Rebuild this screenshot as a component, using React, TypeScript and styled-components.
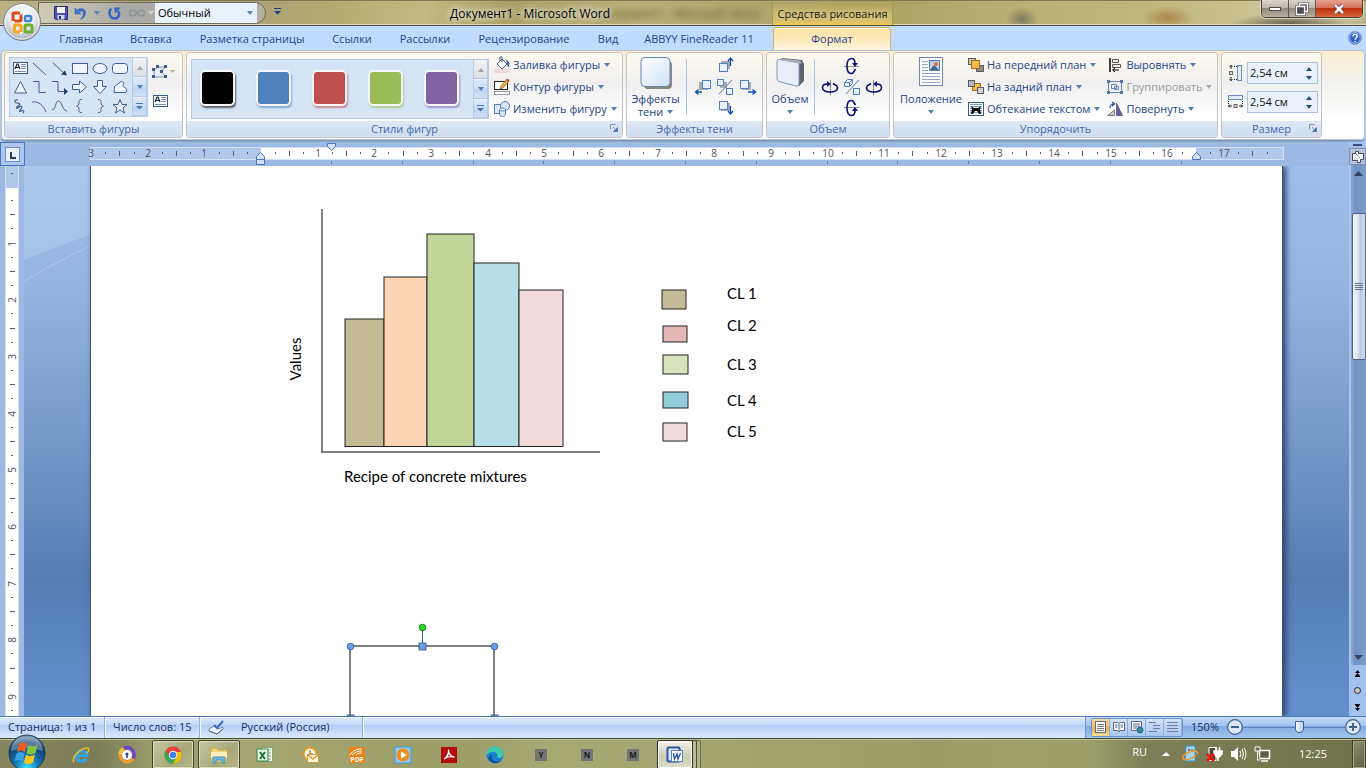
import React from 'react';
import styled, { createGlobalStyle, css } from 'styled-components';

const uiFont = `'Open Sans', 'Segoe UI', sans-serif`;

const GlobalStyle = createGlobalStyle`
  * { box-sizing: border-box; }
  html, body { margin: 0; padding: 0; }
  body { font-family: ${uiFont}; font-size: 11px; line-height: 14px; color: #1e3c7b; overflow: hidden; }
  button, input, select { font: inherit; color: inherit; margin: 0; padding: 0; border: 0; background: none; }
  button { cursor: default; display: flex; align-items: center; }
  svg { display: block; flex: none; overflow: visible; }
`;

/* ---------- shell ---------- */

const Screen = styled.div`
  position: relative;
  display: flex;
  flex-direction: column;
  height: 100vh;
  background: #bfdbff;
`;

const TitleBar = styled.header`
  display: flex;
  height: 26px;
  border-top: 1px solid #7d7850;
  border-bottom: 1px solid #4d5038;
  box-shadow: inset 0 -1px 0 #d8d6bc;
  background:
    radial-gradient(14px 12px at 190px 20px, #8a8f8466, transparent),
    radial-gradient(ellipse 16px 12px at 1022px 18px, #6c6f5ccc, transparent),
    radial-gradient(ellipse 26px 12px at 1168px 17px, #ad8448, transparent),
    radial-gradient(ellipse 60px 12px at 1290px 24px, #5e5a45, transparent),
    linear-gradient(100deg, #b9b287 0, #aaa27a 18%, #b3a96f 24%, #c2ba80 31%, #a9a065 37%, #b8b078 46%, #b0a76c 56%, #a89f60 63%, #b6ae70 72%, #c0b87b 84%, #cfc9a2 96%, #b9b48e 100%);
`;

const TitleLeft = styled.div`
  display: flex;
  width: 772px;
`;

const QuickAccess = styled.div`
  display: flex;
  align-items: center;
  width: 228px;
  height: 22px;
  margin: 1px 0 0 38px;
  padding-left: 13px;
  border: 1px solid #6d6b5b;
  border-radius: 0 11px 11px 0;
  background: linear-gradient(90deg, #cfcab2, #aaaaa6 40%, #b4b2a4);
`;

const QatButton = styled.button<{ $w: number }>`
  justify-content: center;
  width: ${p => p.$w}px;
  height: 20px;
`;

const StyleBox = styled.button`
  width: 102px;
  height: 20px;
  padding: 0 4px 0 3px;
  justify-content: space-between;
  background: #e9f1fb;
  color: #000;
`;

const WindowTitle = styled.h1`
  flex: 1;
  margin: 0;
  padding-top: 6px;
  font-size: 12px;
  line-height: 14px;
  font-weight: 400;
  text-align: center;
  color: #000;
  text-shadow: 0 0 6px #fff, 0 0 8px #fff, 150px 0 6px #3c3a20aa;
`;

const ContextTitle = styled.div`
  width: 121px;
  padding-top: 6px;
  text-align: center;
  white-space: nowrap;
  color: #1c1a10;
  border-left: 1px solid #a59a58;
  border-right: 1px solid #a59a58;
  background: linear-gradient(#c6bb6e00, #d8c06a 85%, #f3ca52);
  text-shadow: 0 0 5px #f4ecc0;
`;

const WindowButtons = styled.div`
  display: flex;
  height: 18px;
  margin: -1px 3px 0 auto;
  border: 1px solid #4b4539;
  border-top: 0;
  border-radius: 0 0 5px 5px;
  overflow: hidden;
  box-shadow: 0 0 1px 1px #ffffff80;
`;

const WindowButton = styled.button<{ $close?: boolean }>`
  justify-content: center;
  width: ${p => (p.$close ? 46 : 27)}px;
  border-right: ${p => (p.$close ? 0 : '1px solid #5f594d')};
  background: ${p =>
    p.$close
      ? 'linear-gradient(#e5a28f 0, #d4725a 45%, #bd2f10 50%, #d9683c 100%)'
      : 'linear-gradient(#ddd6cc 0, #bdb5a8 45%, #938a7c 50%, #b9b19f 100%)'};
`;

const TabRow = styled.nav`
  display: flex;
  height: 24px;
  padding-left: 46px;
  background: #bfdbff;
`;

const Tab = styled.button<{ $w: number }>`
  justify-content: center;
  width: ${p => p.$w}px;
  height: 24px;
  padding-top: 2px;
  white-space: nowrap;
  color: #1e4488;
`;

const ActiveTab = styled(Tab)`
  margin: 1px 0 0 7px;
  height: 24px;
  padding: 0 0 2px;
  border: 1px solid #cfb57a;
  border-top-color: #e0b74c;
  border-bottom: 0;
  border-radius: 4px 4px 0 0;
  background: linear-gradient(#fff 0, #fbe3a5 8%, #fde9bb 50%, #fff6e2 100%);
`;

const HelpButton = styled.button`
  margin: 0 4px 0 auto;
`;

/* ---------- ribbon ---------- */

const Ribbon = styled.section`
  display: flex;
  gap: 3px;
  height: 90px;
  margin: 0 1px;
  padding: 1px 2px;
  border: 1px solid #b6c2d2;
  border-radius: 4px;
  background: linear-gradient(#fdedc9 0, #f7efdf 14%, #f2f1ef 35%, #fff 80%);
  box-shadow: 0 2px 2px #7a93b8;
`;

const Group = styled.section<{ $w: number }>`
  display: flex;
  flex-direction: column;
  width: ${p => p.$w}px;
  height: 86px;
  border: 1px solid #c4c6ca;
  border-radius: 3px;
  overflow: hidden;
  background: linear-gradient(#fefaf0 0, #f8f5f0 18%, #f0efef 35%, #fff 75%);
`;

const GroupBody = styled.div`
  display: flex;
  flex: 1;
  padding: 4px 4px 0;
`;

const GroupLabel = styled.h2`
  display: flex;
  align-items: center;
  justify-content: center;
  position: relative;
  height: 16px;
  margin: 0;
  font-size: 11px;
  line-height: 14px;
  font-weight: 400;
  color: #3e6aaa;
  background: linear-gradient(#dfe8f6, #cfdcf0);
`;

const Launcher = styled.button`
  position: absolute;
  right: 4px;
  top: 3px;
`;

const Gallery = styled.div<{ $wide?: boolean }>`
  display: flex;
  height: 60px;
  margin-top: ${p => (p.$wide ? 2 : 0)}px;
  border: 1px solid #b6cde8;
  background: #d5e5f6;
`;

const ShapeGrid = styled.div`
  display: grid;
  grid-template-columns: repeat(6, 20px);
  grid-auto-rows: 19px;
  width: 122px;
`;

const IconButton = styled.button`
  justify-content: center;
`;

const ScrollColumn = styled.div`
  display: flex;
  flex-direction: column;
  width: 15px;
`;

const ScrollButton = styled.button<{ $off?: boolean }>`
  flex: 1;
  justify-content: center;
  border: 1px solid #b3cae8;
  border-top-color: #e7f0fb;
  color: ${p => (p.$off ? '#a0a6b0' : '#4a76bd')};
  background: ${p => (p.$off ? 'linear-gradient(#f2f2f3, #dcdfe4)' : 'linear-gradient(#dceafa 0, #c9ddf5 50%, #bbd3f2 51%, #cfe1f6)')};
`;

const EditColumn = styled.div`
  display: flex;
  flex-direction: column;
  gap: 15px;
  padding: 8px 0 0 4px;
`;

const Swatches = styled.div`
  display: flex;
  gap: 21px;
  width: 281px;
  padding: 10px 0 0 8px;
`;

const Swatch = styled.button<{ $c: string }>`
  width: 35px;
  height: 36px;
  border: 2px solid #f6f6f8;
  border-radius: 5px;
  background: ${p => p.$c};
  box-shadow: 1px 2px 2px ${p => p.$c}99;
`;

const ButtonColumn = styled.div<{ $ml?: number }>`
  display: flex;
  flex-direction: column;
  margin-top: -3px;
  margin-left: ${p => p.$ml || 0}px;
`;

const MenuButton = styled.button`
  gap: 3px;
  height: 22px;
  white-space: nowrap;
  color: #1e4488;
  > span { margin-right: 1px; }
  &:disabled { color: #9b9b9b; }
`;

const BigButton = styled.button<{ $w: number }>`
  flex-direction: column;
  justify-content: flex-start;
  width: ${p => p.$w}px;
  color: #1e4488;
`;

const BigLabel = styled.span`
  display: flex;
  align-items: center;
  gap: 4px;
  height: 13px;
  line-height: 13px;
`;

const BigIcon = styled.span`
  display: flex;
  height: 35px;
  align-items: flex-start;
`;

const Divider = styled.span<{ $m: string }>`
  width: 1px;
  height: 56px;
  margin: ${p => p.$m};
  background: #a9c4e4;
`;

const NudgePad = styled.div`
  display: grid;
  grid-template-columns: repeat(3, 22px);
  grid-template-rows: repeat(3, 21px);
  height: 63px;
  margin-top: -2px;
`;

const PadButton = styled.button<{ $area: string }>`
  justify-content: center;
  grid-area: ${p => p.$area};
`;

const SizeColumn = styled.div`
  display: flex;
  flex-direction: column;
  gap: 7px;
  padding: 5px 0 0 2px;
`;

const SizeRow = styled.label`
  display: flex;
  align-items: center;
  gap: 4px;
`;

const SpinBox = styled.span`
  display: flex;
  width: 71px;
  height: 22px;
  border: 1px solid #a9c2e4;
  background: #e9f2fc;
`;

const SpinInput = styled.input`
  flex: 1;
  min-width: 0;
  padding-left: 2px;
  color: #111;
  outline: 0;
`;

const Spinners = styled.span`
  display: flex;
  flex-direction: column;
  justify-content: center;
  gap: 5px;
  width: 11px;
  color: #244a86;
`;

/* ---------- document area ---------- */

const Main = styled.main`
  display: flex;
  flex: 1;
  min-height: 0;
  margin-top: 2px;
`;

const DocColumn = styled.div`
  display: flex;
  flex-direction: column;
  flex: 1;
  min-width: 0;
`;

const RulerRow = styled.div`
  display: flex;
  height: 24px;
  background: #9bb9e1;
`;

const TabSelector = styled.button`
  justify-content: center;
  width: 25px;
  height: 24px;
  border: 1px solid #4473ca;
  background: #adc6ea;
`;

const HorizontalRuler = styled.div`
  flex: 1;
  margin: 5px 65px 0 65px;
  height: 13px;
  border: 1px solid #d3e1f6;
  background: linear-gradient(#fff, #fff) 170px 0 / calc(100% - 257px) 100% no-repeat #b0c8ea;
`;

const Workspace = styled.div`
  display: flex;
  flex: 1;
  min-height: 0;
  overflow: hidden;
`;

const VerticalRuler = styled.div`
  width: 24px;
  padding: 0 5px;
  background: #9bb9e1;
`;

const VerticalStrip = styled.div`
  height: 100%;
  border: solid #d3e1f6;
  border-width: 0 1px;
  background: linear-gradient(#b0c8ea 22px, #fff 22px);
`;

const Desk = styled.div`
  position: relative;
  display: flex;
  flex: 1;
  padding: 0 66px;
  background: linear-gradient(#a1c0e9 0, #93b2dd 24%, #7396c8 52%, #557cb3 75%, #6590cf 100%);
`;

const Swoosh = styled.svg`
  position: absolute;
  left: 0;
  top: 0;
`;

const Page = styled.article`
  position: relative;
  flex: 1;
  border: solid #47536a;
  border-width: 0 1px;
  background: #fff;
  box-shadow: 3px 0 6px #2c456f;
  overflow: hidden;
`;

const ScrollBar = styled.div`
  display: flex;
  flex-direction: column;
  align-items: center;
  width: 17px;
  background: #a3c1ee;
`;

const SplitHandle = styled.button`
  width: 9px;
  height: 2px;
  margin: 2px 0 2px;
  background: #3a4a72;
`;

const RulerToggle = styled.button`
  justify-content: center;
  width: 17px;
  height: 17px;
  border: 1px solid #8090b4;
  background: #b9c2d8;
`;

const Track = styled.div`
  display: flex;
  flex-direction: column;
  align-items: center;
  flex: 1;
  width: 100%;
  padding: 6px 0 5px;
  color: #33425f;
  border-left: 2px solid #a8c4ec;
  background: linear-gradient(90deg, #8ba7ce, #6f92c2 30%, #7d9dc9);
`;

const Thumb = styled.button`
  justify-content: center;
  width: 14px;
  height: 147px;
  margin: 37px 0 auto;
  border: 1px solid #52648a;
  border-radius: 2px;
  background: linear-gradient(90deg, #f2f5fa, #dce3ed 45%, #b4c7de 60%, #d6e0ee);
`;

const BrowseButtons = styled.div`
  display: flex;
  flex-direction: column;
  align-items: center;
  justify-content: space-around;
  height: 51px;
`;

/* ---------- status bar ---------- */

const StatusBar = styled.footer`
  display: flex;
  height: 23px;
  color: #15305f;
  border-top: 1px solid #4c7bb3;
  border-bottom: 1px solid #3c4738;
  background: linear-gradient(#fff 0, #d7e6fa 8%, #c4daf7 35%, #b1cef5 38%, #cfe1f9 80%, #dbe9fb 100%);
`;

const StatusItem = styled.button<{ $w: number }>`
  width: ${p => p.$w}px;
  padding: 0 0 1px 8px;
  gap: 16px;
  white-space: nowrap;
  border-right: 1px solid #8fb2df;
  box-shadow: 1px 0 0 #f2f7fe;
`;

const StatusTools = styled.div`
  display: flex;
  align-items: center;
  width: 281px;
  margin-left: auto;
  padding: 0 5px 1px 5px;
  border-left: 1px solid #6e95cc;
  background: linear-gradient(#c3dafa 0, #a4c4f2 40%, #83abe2 45%, #a5c5f0 100%);
`;

const ViewButtons = styled.div`
  display: flex;
  border: 1px solid #6e93c9;
  border-radius: 2px;
`;

const ViewButton = styled.button<{ $on?: boolean }>`
  justify-content: center;
  width: 18px;
  height: 17px;
  border-right: 1px solid #8fb0dc;
  background: ${p => (p.$on ? 'linear-gradient(#fbd9a0, #f3ae48 60%, #fde39a)' : 'linear-gradient(#d4e3f7, #a9c6ee)')};
`;

const ZoomValue = styled.button`
  justify-content: center;
  width: 44px;
`;

const ZoomSlider = styled.input`
  appearance: none;
  flex: 1;
  min-width: 0;
  height: 16px;
  background: linear-gradient(#5d83bb, #5d83bb) 0 8px / 100% 1px no-repeat;
  &::-webkit-slider-thumb {
    appearance: none;
    width: 9px;
    height: 12px;
    border: 1px solid #3f619b;
    border-radius: 1px 1px 5px 5px;
    background: linear-gradient(90deg, #f6f9fd, #b9cde9);
  }
`;

/* ---------- taskbar ---------- */

const TaskBar = styled.footer`
  display: flex;
  height: 29px;
  border-top: 1px solid #c5c69c;
  background: linear-gradient(90deg, #85865f 0, #7c7d57 7%, #989a69 11%, #a5a873 18%, #9b9d69 33%, #a6a974 40%, #a2a56f 52%, #9fa26c 62%, #999b68 68%, #9fa26c 74%, #9b9e6a 80%, #7c7e58 84%, #77794f 92%, #70724c 100%);
`;

const StartOrb = styled.button`
  position: relative;
  width: 60px;
  padding-left: 8px;
  > svg { margin-top: -3px; }
`;

const Task = styled.button<{ $open?: boolean }>`
  justify-content: center;
  width: 42px;
  height: 29px;
  margin-right: 4px;
  ${p => p.$open && css`
    border: 1px solid #3d3f29;
    border-radius: 2px;
    box-shadow: inset 0 0 0 1px #dcdcc0;
    background: linear-gradient(135deg, #c8c9a4, #a6a878 60%, #b5b78c);
  `}
`;

const ActiveTask = styled(Task)`
  width: 36px;
  margin: 0 0 0 -1px;
  border: 1px solid #2e2f20;
  border-radius: 2px;
  background: linear-gradient(#f3f3ec, #c9cbb0 60%, #dedfcb);
  box-shadow: inset 0 0 0 1px #fff, 4px 0 0 -1px #b9bb92, 4px 0 0 0 #4b4d36, 8px 0 0 -1px #b0b287, 8px 0 0 0 #6a6c4d;
`;

const KeyTile = styled.span`
  width: 12px;
  height: 12px;
  font-size: 8px;
  line-height: 12px;
  font-weight: 700;
  text-align: center;
  color: #1c1c1c;
  background: #747474;
`;

const Tray = styled.div`
  display: flex;
  align-items: center;
  gap: 8px;
  margin-left: auto;
  color: #fff;
`;

const Language = styled.button`
  margin: -5px 7px 0 0;
`;

const HiddenIcons = styled.button`
  margin-right: 4px;
`;

const Clock = styled.time`
  width: 66px;
  margin-left: 2px;
  text-align: center;
  color: #fff;
`;

const ShowDesktop = styled.button`
  width: 14px;
  height: 29px;
  margin-left: -2px;
  border: 1px solid #40422c;
  box-shadow: inset 0 0 0 1px #a5a786;
  background: linear-gradient(145deg, #8c8e6d, #5f6142);
`;

const Orb = styled.button`
  position: absolute;
  left: 3px;
  top: 3px;
`;

/* ---------- icons ---------- */

const Caret = ({ c = '#5380b8' }: { c?: string }) => (
  <svg width="6" height="4" viewBox="0 0 6 4"><path d="M0 0h6L3 4z" fill={c} /></svg>
);
const CaretUp = ({ c = 'currentColor' }: { c?: string }) => (
  <svg width="6" height="4" viewBox="0 0 6 4"><path d="M0 4h6L3 0z" fill={c} /></svg>
);
const CaretBar = () => (
  <svg width="7" height="7" viewBox="0 0 7 7"><path d="M0 0h7v1H0zM0 3h7L3.5 6.500z" fill="currentColor" /></svg>
);

const OfficeLogo = () => (
  <svg width="38" height="38" viewBox="0 0 38 38">
    <defs>
      <radialGradient id="orbFill" cx="50%" cy="30%" r="70%">
        <stop offset="0" stopColor="#fff" /><stop offset=".55" stopColor="#e4e7ec" /><stop offset="1" stopColor="#a8b0bd" />
      </radialGradient>
    </defs>
    <circle cx="19" cy="19" r="18.500" fill="url(#orbFill)" stroke="#7b8089" />
    <circle cx="19" cy="19" r="17" fill="none" stroke="#fff" strokeOpacity=".8" />
    <g fill="none" strokeWidth="3" strokeLinejoin="round">
      <rect x="10" y="10" width="8" height="8" rx="1" stroke="#dd4a18" />
      <rect x="22" y="13" width="6" height="5" rx="1" stroke="#3a86d8" strokeWidth="2.500" />
      <rect x="11.500" y="22" width="6.500" height="7" rx="1" stroke="#f4a91c" />
      <rect x="22" y="22" width="7" height="7" rx="1" stroke="#6fae2c" />
    </g>
    <path d="M18 8.500v3M28 19.500h3M18 29v2M8.500 19h3" stroke="#f4f4f4" strokeWidth="2" />
  </svg>
);

const SaveIcon = () => (
  <svg width="14" height="14" viewBox="0 0 14 14">
    <path d="M.5.5h13v13h-12l-1-1z" fill="#4a4fb0" stroke="#2c2f80" />
    <path d="M3 1h8v6H3z" fill="#f1f4fc" /><path d="M3.500 9h7v4.500h-7z" fill="#cfd5ea" /><path d="M5 10h2v3H5z" fill="#2c2f80" />
  </svg>
);
const UndoIcon = () => (
  <svg width="14" height="13" viewBox="0 0 14 13">
    <path d="M1 1v6h6L5 5c3-2 5 0 4 3-.5 1.500-1 3-2.500 4.500C10 11 12 8 11.500 5 11 1.500 6.500.5 3 3z" fill="#3f74cf" stroke="#2856a8" strokeWidth=".5" />
  </svg>
);
const RedoIcon = () => (
  <svg width="13" height="13" viewBox="0 0 13 13">
    <path d="M3 1.500C-.5 6.500 2.500 11.500 6.500 11.500S12.500 7 10 4" fill="none" stroke="#3468c8" strokeWidth="2.500" />
    <path d="M6 .5h7L7 6.500z" fill="#3468c8" />
  </svg>
);
const LinkIcon = () => (
  <svg width="16" height="8" viewBox="0 0 16 8">
    <path d="M8 4C6 1 4.500 1 3.500 1a3 3 0 000 6C5 7 6 6.500 8 4s3-3 4.500-3a3 3 0 010 6C11 7 10 7 8 4z" fill="none" stroke="#8f939b" strokeWidth="1.500" />
  </svg>
);
const HelpIcon = () => (
  <svg width="14" height="14" viewBox="0 0 14 14">
    <circle cx="7" cy="7" r="6.500" fill="#2a61cf" stroke="#8aa5d8" /><circle cx="7" cy="7" r="5.300" fill="none" stroke="#dfe9ff" strokeWidth=".6" />
    <path d="M5 5.500c0-3 4.200-2.600 4.200-.2C9.200 7 7.100 7 7.100 8.700M7.100 10v1.300" fill="none" stroke="#fff" strokeWidth="1.500" />
  </svg>
);
const LauncherIcon = () => (
  <svg width="8" height="8" viewBox="0 0 8 8">
    <path d="M.5 5.500v-5h5M3 3l3 3M7.500 3.500v4h-4z" fill="none" stroke="#7492bd" /><path d="M3.500 7.500h4v-4z" fill="#4a6fa5" />
  </svg>
);

const TextBoxIcon = () => (
  <svg width="16" height="14" viewBox="0 0 16 14">
    <rect x="1.500" y="1.500" width="14" height="11" fill="#fff" stroke="#3c5a86" />
    <path d="M3 8l2-5h1l2 5M4 6.500h3" fill="none" stroke="#10203c" strokeWidth="1.200" />
    <path d="M9 3.500h5M9 5.500h5M9 7.500h5M3 10.500h11" stroke="#6f8fbf" />
  </svg>
);

const shapePaths: React.ReactNode[] = [
  <path key="a" d="M3 5l13 12" />,
  <g key="b"><path d="M3 5l11 10" /><path d="M17 17.500l-6-1 4-4z" fill="#1f3f6e" stroke="none" /></g>,
  <rect key="c" x="2.500" y="5.500" width="15" height="10" />,
  <ellipse key="d" cx="10" cy="10.500" rx="7" ry="5" />,
  <rect key="e" x="2.500" y="5.500" width="15" height="10" rx="3" />,
  <path key="f" d="M10.500 4.500l6 11.500h-12z" />,
  <path key="g" d="M3 4.500h6v11h7" fill="none" />,
  <g key="h"><path d="M2 4.500h6v10h7" fill="none" /><path d="M14 11l4 3.500-4 3.500z" fill="#1f3f6e" stroke="none" /></g>,
  <path key="i" d="M2.500 7.500h7v-3.500l7 6-7 6v-3.500h-7z" />,
  <path key="j" d="M7.500 3.500h5v6h4l-6.500 7-6.500-7h4z" />,
  <path key="k" d="M4 15.500h12c3-5-3-4-3-7 2-3 0-4-2-4L4.500 9.500z" />,
  <path key="l" d="M8 4C4 3 4 7 7 7s4 1 1 3-1 3 1 1 4 0 2 2-2 3 0 2 4 0 2 2" fill="none" strokeWidth="1.200" />,
  <path key="m" d="M2 6c7-1 11 3 14 10" fill="none" />,
  <path key="n" d="M2 14c4 0 3-9 6.500-9s4 10 8.500 10" fill="none" />,
  <path key="o" d="M12 3.500c-3 0-3 1-3 3s-1 3.500-2.500 3.500C8 10 9 11 9 13.500s0 3 3 3" fill="none" />,
  <path key="p" d="M8 3.500c3 0 3 1 3 3s1 3.500 2.500 3.500C12 10 11 11 11 13.500s0 3-3 3" fill="none" />,
  <path key="q" d="M10 3.500l2 5h5l-4 3.500 1.500 5-4.500-3-4.500 3 1.500-5-4-3.500h5z" />,
];

const ShapeIcon = ({ i }: { i: number }) => (
  <svg width="20" height="20" viewBox="0 0 20 20" fill="#eef5fd" stroke="#3d5f92">{shapePaths[i]}</svg>
);

const EditPointsIcon = () => (
  <svg width="23" height="14" viewBox="0 0 23 14">
    <path d="M2 12V5l4-3h8L9 6l5 6z" fill="#e6edf7" stroke="#8298bd" />
    <g fill="#3f5c8f"><path d="M0 3h3v3H0zM4 0h3v3H4zM12 0h3v3h-3zM8 5h3v3H8zM0 10h3v3H0zM12 10h3v3h-3z" /></g>
    <path d="M18 5h5l-2.500 3z" fill="#a9a9a9" />
  </svg>
);

const FillIcon = () => (
  <svg width="16" height="16" viewBox="0 0 16 16">
    <path d="M0 12h16v4H0z" fill="#f2d6da" />
    <path d="M3 7l5-5 5 5-5 5z" fill="#fdfdfd" stroke="#4b5f80" /><path d="M6 4V0h2v5" fill="none" stroke="#4b5f80" />
    <path d="M12 3c4 1 4 5 2 8l-1-4z" fill="#2f65b5" />
  </svg>
);
const OutlineIcon = () => (
  <svg width="16" height="16" viewBox="0 0 16 16">
    <rect x=".5" y="2.500" width="13" height="8" fill="#fff" stroke="#222" />
    <path d="M6 10l1-3 6-7 2 2-6 7z" fill="#f0b545" stroke="#7f5a20" strokeWidth=".7" /><path d="M12 1l2-1 1.500 1.500L14 3z" fill="#cf3c3c" />
    <rect x=".5" y="12.500" width="15" height="3" fill="#fff" stroke="#9a9a9a" />
  </svg>
);
const ChangeShapeIcon = () => (
  <svg width="16" height="16" viewBox="0 0 16 16" fill="#dbe8f8" stroke="#527db8">
    <path d="M.5 3.500h8v9h-8z" /><circle cx="11" cy="5" r="4.500" /><path d="M5.500 8.500v5c0 2.500 6 2.500 6 0v-5" /><ellipse cx="8.500" cy="8.500" rx="3" ry="1.500" fill="#fff" />
  </svg>
);

const ShadowBigIcon = () => (
  <svg width="32" height="33" viewBox="0 0 32 33">
    <defs><linearGradient id="sh" x2="1" y2="1"><stop stopColor="#fff" /><stop offset="1" stopColor="#cfe0f7" /></linearGradient></defs>
    <rect x="4" y="4" width="28" height="28" rx="4" fill="#8d8578" /><rect x="1" y=".5" width="29" height="29" rx="4" fill="url(#sh)" stroke="#5f86bd" />
  </svg>
);
const CubeBigIcon = () => (
  <svg width="28" height="30" viewBox="0 0 28 30">
    <path d="M3 3l3-2 20 2 2 4v17l-5 5z" fill="#5c6470" /><path d="M4 2.500l18 2.500q1 0 1 2v20q0 3-3 2L3 24.500Q1 24 1 21V5q0-3 3-2.500z" fill="#e9eff9" stroke="#7f95bb" />
    <path d="M5 1.500l19 2 2 3-3 0-18-3z" fill="#a5adba" />
  </svg>
);
const PositionBigIcon = () => (
  <svg width="25" height="30" viewBox="0 0 25 30">
    <rect x=".5" y=".5" width="23" height="28" fill="#fcfdff" stroke="#6e87ac" />
    <path d="M3 4.500h6M3 7.500h6M3 10.500h6M3 13.500h6M3 16.500h18M3 19.500h18M3 22.500h18M3 25.500h18" stroke="#8ea8cc" />
    <rect x="10.500" y="3.500" width="10" height="10" fill="#b7d0ee" stroke="#5c7fb0" /><path d="M11 13l4-5 5 5z" fill="#4a5f83" /><circle cx="17" cy="7" r="2" fill="#e0703a" />
  </svg>
);

const NudgeIcon = ({ dir }: { dir: 'up' | 'down' | 'left' | 'right' }) => {
  const arrow = { up: 'M13.500 9V2M11 4l2.500-3L16 4', down: 'M13.500 7v7M11 12l2.500 3 2.500-3', left: 'M7 14H1M3.500 11.500L.5 14l3 2.500', right: 'M9 14h7M13.500 11.500l3 2.500-3 2.500' }[dir];
  const x = dir === 'left' ? 7 : dir === 'right' ? 1 : 2;
  const y = dir === 'up' ? 6 : 2;
  return (
    <svg width="17" height="17" viewBox="0 0 17 17">
      <rect x={x + (dir === 'left' ? -3 : 2)} y={y + (dir === 'up' ? -2 : 2)} width="9" height="8" fill="#a9a9a9" />
      <rect x={x + .5} y={y + .5} width="8" height="8" fill="#eaf2fd" stroke="#4e80c4" />
      <path d={arrow} fill="none" stroke="#0d4fae" strokeWidth="1.300" />
    </svg>
  );
};
const ShadowToggleIcon = () => (
  <svg width="16" height="16" viewBox="0 0 16 16" fill="#eaf2fd" stroke="#4e80c4">
    <path d="M3 3h7v6H3z" fill="#aaa" stroke="none" /><rect x=".5" y=".5" width="6" height="6" /><path d="M15 1L2 15" /><rect x="9.500" y="9.500" width="6" height="6" />
  </svg>
);
const CubeToggleIcon = () => (
  <svg width="16" height="16" viewBox="0 0 16 16" fill="#eaf2fd" stroke="#4e80c4">
    <path d="M.5 3.500l3-3h5v4l-3 3h-5zM.5 3.500h5v4M5.500 3.500l3-3" /><path d="M15 1L2 15" /><rect x="9.500" y="9.500" width="6" height="6" />
  </svg>
);
const tiltTransforms = {
  down: undefined,
  up: 'translate(0 16) scale(1 -1)',
  left: 'translate(0 16) rotate(-90)',
  right: 'translate(16 16) scale(-1 1) rotate(-90)',
};
const TiltIcon = ({ dir }: { dir: keyof typeof tiltTransforms }) => (
  <svg width="16" height="16" viewBox="0 0 16 16">
    <g transform={tiltTransforms[dir]}>
      <path d="M0 8.500h15" stroke="#8e8e8e" />
      <path d="M9 15C4 17 3 12 3 8s1-7.500 4.500-7.500c2.500 0 3.500 2.500 3.500 5" fill="none" stroke="#10107c" strokeWidth="1.600" />
      <path d="M8 5h6l-3 4z" fill="#10107c" /><path d="M11.500 11L9 15" stroke="#10107c" strokeWidth="1.600" />
    </g>
  </svg>
);

const StackIcon = ({ front }: { front?: boolean }) => (
  <svg width="16" height="14" viewBox="0 0 16 14" stroke="#5b5b5b">
    {front ? (
      <><rect x=".5" y=".5" width="7" height="6" fill="#c8c8c8" /><rect x="8.500" y="7.500" width="7" height="6" fill="#8b8b8b" /><rect x="3.500" y="2.500" width="8" height="8" fill="#f4bb48" stroke="#9d7322" /></>
    ) : (
      <><rect x="4.500" y="3.500" width="8" height="7" fill="#f4bb48" stroke="#9d7322" /><rect x=".5" y=".5" width="6" height="6" fill="#b7b7b7" /><rect x="9.500" y="7.500" width="6" height="6" fill="#d2d2d2" /></>
    )}
  </svg>
);
const WrapIcon = () => (
  <svg width="16" height="14" viewBox="0 0 16 14">
    <rect x=".5" y=".5" width="15" height="13" fill="#fff" stroke="#3a5a8c" /><path d="M2 2.500h12M2 4.500h12M2 6.500h12M2 8.500h12M2 10.500h12" stroke="#7fa0cf" />
    <path d="M3 4l3 2h4l3-2-1 3 1 5h-2l-2-3H7l-2 3H3l1-5z" fill="#111" />
  </svg>
);
const AlignIcon = () => (
  <svg width="16" height="14" viewBox="0 0 16 14"><path d="M3 0v14" stroke="#000" strokeWidth="1.500" /><path d="M5.500 1.500h6v3h-6zM5.500 6.500h8v3h-8z" fill="#f1f1f1" stroke="#555" /><path d="M6 12h6M8 10l-2.500 2L8 14" stroke="#000" fill="none" /></svg>
);
const GroupIcon = () => (
  <svg width="16" height="14" viewBox="0 0 16 14" fill="none" stroke="#6384b8"><rect x="1.500" y="1.500" width="13" height="11" /><path d="M4.500 4.500h5v4h-5zM7.500 6.500h4v3h-4z" /><path d="M0 0h3v3H0zM13 0h3v3h-3zM0 11h3v3H0zM13 11h3v3h-3z" fill="#5675a8" stroke="none" /></svg>
);
const RotateIcon = () => (
  <svg width="16" height="14" viewBox="0 0 16 14"><path d="M9.500 13.500V1l6 12.500z" fill="#6a5ba0" stroke="#3f3670" strokeWidth=".6" /><path d="M.5 13.500h7V8z" fill="#c7c7c7" stroke="#666" strokeWidth=".8" /><path d="M3 6c0-3 1-4 4-4M5 0l2.500 2L5 4" fill="none" stroke="#1c4c9c" strokeWidth="1.200" /></svg>
);
const HeightIcon = () => (
  <svg width="15" height="16" viewBox="0 0 15 16"><rect x="9.500" y=".5" width="4" height="15" fill="#e4eefa" stroke="#6c8fbf" /><path d="M3 0v4M1.500 2L3 .5 4.500 2M3 16v-4M1.500 14L3 15.500 4.500 14" fill="none" stroke="#222" /><path d="M6 1.500h3M6 14.500h3" stroke="#222" strokeDasharray="1 1" /><rect x="1.500" y="6.500" width="3" height="3" fill="#ddd" stroke="#666" /></svg>
);
const WidthIcon = () => (
  <svg width="15" height="14" viewBox="0 0 15 14"><rect x=".5" y=".5" width="14" height="4" fill="#e4eefa" stroke="#6c8fbf" /><path d="M0 11h4M2 9.500L.5 11 2 12.500M15 11h-4M13 9.500l1.500 1.500-1.500 1.500" fill="none" stroke="#222" /><path d="M.5 6v3M14.500 6v3" stroke="#222" strokeDasharray="1 1" /><rect x="6" y="9.500" width="3" height="3" fill="#ddd" stroke="#666" /></svg>
);

const SheetIcon = ({ kind }: { kind: number }) => (
  <svg width="12" height="12" viewBox="0 0 12 12" fill="none" stroke="#56698c">
    {kind === 0 && <><rect x=".5" y=".5" width="10" height="11" fill="#fff" /><path d="M2 3.500h7M2 5.500h7M2 7.500h7M2 9.500h7" stroke="#777" /></>}
    {kind === 1 && <><path d="M.5 1.500h4l1.500 1 1.500-1h4v8h-4L6 11l-1.500-1.500h-4zM6 3v8" fill="#fff" /><path d="M2 4h2.500M2 6h2.500M7.500 4H10M7.500 6H10" /></>}
    {kind === 2 && <><path d="M.5.5h10v9H.5z" fill="#fff" /><path d="M2 3h7M2 5h7M2 7h4" /><circle cx="9" cy="9" r="3" fill="#2f8f78" stroke="#2a5ca8" /></>}
    {kind === 3 && <path d="M0 1.500h7M4 4.500h7M4 7.500h7M0 10.500h8" stroke="#6b7c9d" />}
    {kind === 4 && <path d="M0 1.500h11M0 4.500h11M0 7.500h11M0 10.500h11" stroke="#6b7c9d" />}
  </svg>
);
const ZoomIcon = ({ plus }: { plus?: boolean }) => (
  <svg width="16" height="16" viewBox="0 0 16 16"><circle cx="8" cy="8" r="7.300" fill="#dce8f8" stroke="#41608f" strokeWidth="1.200" /><path d={plus ? 'M4 8h8M8 4v8' : 'M4 8h8'} stroke="#41608f" strokeWidth="2" /></svg>
);
const ProofIcon = () => (
  <svg width="17" height="15" viewBox="0 0 17 15"><path d="M1 9l5-3 4 3 5-2v2l-6 5-8-3z" fill="#eef3fb" stroke="#6b83ad" /><path d="M1 11l8 3 6-5" fill="none" stroke="#5c6c8c" /><path d="M6 5l3 3 6-7" fill="none" stroke="#3f6fc8" strokeWidth="2" /></svg>
);

const WinLogo = () => (
  <svg width="38" height="38" viewBox="0 0 38 38">
    <defs><radialGradient id="win" cx="50%" cy="90%" r="90%"><stop stopColor="#3fe0ff" /><stop offset=".35" stopColor="#1479b4" /><stop offset=".75" stopColor="#123f6c" /><stop offset="1" stopColor="#7fa3bf" /></radialGradient></defs>
    <circle cx="19" cy="19" r="18" fill="url(#win)" stroke="#1c3b52" /><path d="M3 17C4 7 11 2.500 19 2.500S34 7 35 17q-16-6-32 0z" fill="#fff" opacity=".3" />
    <path d="M11 10q4-3 8 0l-2 8q-4-3-8 0z" fill="#ee5a24" /><path d="M20.500 11q4 3 9 0l-2 8q-5 3-9 0z" fill="#86c440" />
    <path d="M8.500 19.500q4-3 8 0l-2 8q-4-3-8 0z" fill="#3aa0e8" /><path d="M18 20.500q4 3 9 0l-2 8q-5 3-9 0z" fill="#fcc419" />
  </svg>
);

const TaskIcon = ({ n }: { n: string }) => (
  <svg width="18" height="18" viewBox="0 0 18 18">
    {n === 'ie' && <><path d="M14.500 12.500C11 17 3.500 15.500 4 9.500S13.500 3 15 9.500H5.500" fill="none" stroke="#2fa4e7" strokeWidth="3" /><path d="M2 16C-1 12 8 2 16 2c2 1 0 4-1 5" fill="none" stroke="#f1b92e" strokeWidth="1.500" /></>}
    {n === 'ring' && <><circle cx="9" cy="9" r="7" fill="none" stroke="#f59b2c" strokeWidth="3" /><path d="M6 2.500a7 7 0 019 10" fill="none" stroke="#6a48c4" strokeWidth="3.500" /><path d="M2 8a7 7 0 013-5" fill="none" stroke="#f7c53a" strokeWidth="3.500" /><circle cx="9" cy="9" r="5" fill="#fff" /><circle cx="9" cy="8" r="1.500" fill="#3b3f86" /><path d="M9 8v4" stroke="#3b3f86" strokeWidth="1.500" /></>}
    {n === 'chrome' && <><circle cx="9" cy="9" r="8.500" fill="#3aa757" /><path d="M1.600 4.800A8.500 8.500 0 0117 6H9z" fill="#ea4335" /><path d="M9 17.500A8.500 8.500 0 0017 6H9l3.500 5.500z" fill="#fbbc04" /><path d="M1.600 4.800L5.500 11 9 9V5z" fill="#ea4335" /><path d="M1.600 4.800a8.500 8.500 0 007.400 12.700l3-6H5.500z" fill="#3aa757" /><circle cx="9" cy="9" r="4.200" fill="#fff" /><circle cx="9" cy="9" r="3.300" fill="#4285f4" /></>}
    {n === 'folder' && <><path d="M1 2h6l1 2h9v12H1z" fill="#f0d57c" stroke="#c9a94a" /><path d="M1 6h16v6H1z" fill="#fbf0b8" /><path d="M3 17v-6h12v6h-3v-3H6v3z" fill="#6fb8e0" stroke="#4a94c4" /></>}
    {n === 'excel' && <><rect x="5.500" y="1.500" width="11" height="14" fill="#fff" stroke="#7da77d" /><path d="M12 4h3M12 7h3M12 10h3M12 13h3" stroke="#6fa86f" /><path d="M1 3h11v12H1z" fill="#e9f5e9" stroke="#2f8a3a" /><path d="M4 6l5 7M9 6l-5 7" stroke="#1f7a2c" strokeWidth="2" /></>}
    {n === 'outlook' && <><circle cx="8" cy="8" r="6.500" fill="#fdf3d8" stroke="#dd9a2c" strokeWidth="2" /><path d="M8 4v4h3" stroke="#8a5c14" fill="none" /><path d="M5.500 8.500h11v8h-11z" fill="#fff7df" stroke="#cf9b3c" /><path d="M6 9l5 4 5-4" fill="none" stroke="#dd9a2c" strokeWidth="1.500" /></>}
    {n === 'pdf' && <><rect x="1" y="1" width="16" height="16" fill="#ee8116" /><path d="M2 9C5 4 9 3 14 3M4 9c3-3 6-4 10-4M8 9c2-2 4-2 6-2" stroke="#fff" fill="none" /><text x="9" y="16" textAnchor="middle" fontSize="7" fontWeight="700" fill="#fff">PDF</text></>}
    {n === 'media' && <><rect x="1" y="1" width="16" height="16" fill="#8cc8ee" stroke="#4b9bd0" /><circle cx="9" cy="9" r="6.500" fill="#f28a1c" /><path d="M7 5.500l6 3.500-6 3.500z" fill="#fff" /></>}
    {n === 'acrobat' && <><rect x="1" y="1" width="16" height="16" fill="#b40c0c" /><path d="M4 13C7 11 9 7 8.500 3.500c0 4 2 7 6 7.500-4-1-8 0-10.500 2z" fill="none" stroke="#fff" strokeWidth="1.300" /></>}
    {n === 'edge' && <><circle cx="9" cy="9" r="8.500" fill="#1b7fd0" /><path d="M.8 7C2 2 6 .5 9 .5c6 0 9 5 8 9-1 3-5 3-6 1 1-2 0-4-3-4.500C5 5.500 2 7 .8 9z" fill="#3fcbb0" /><path d="M6 8c-2 5 3 9 9 7-4 4-11 2-13-3z" fill="#0c4f9c" /></>}
    {n === 'word' && <><rect x="1.500" y="1.500" width="12" height="14" rx="1" fill="#dfe9f8" stroke="#2e55a5" strokeWidth="2" /><rect x="5.500" y="4.500" width="11" height="11" fill="#fff" stroke="#5e82c0" /><path d="M7.500 7l1 6 2.500-5 1 5 2.500-6" fill="none" stroke="#2b54a8" strokeWidth="1.400" /></>}
  </svg>
);

const TrayIcon = ({ n }: { n: string }) => (
  <svg width="16" height="16" viewBox="0 0 16 16">
    {n === 'update' && <><path d="M4 0h9v15H3z" fill="#9fd6f3" stroke="#3d93c9" /><path d="M6 3h2v2H6z" fill="#e34" /><path d="M9 3h2v2H9z" fill="#3b3" /><path d="M1 13C-1 9 7 5 14 5l2 3M1 13c4 2 10-1 13-4" fill="none" stroke="#f09a2a" strokeWidth="1.500" /></>}
    {n === 'power' && <><path d="M3 1.500h7v13H3z" fill="#4a4c3a" stroke="#fff" /><path d="M10 1v4M13.500 1v4M8 5h8v3l-3 3h-2l-3-3zM12 10v5" stroke="#fff" fill="#fff" strokeWidth="1.500" /><path d="M1 8l7 7M8 8l-7 7" stroke="#e11" strokeWidth="2.500" /></>}
    {n === 'sound' && <><path d="M1 5h3l4-4v14l-4-4H1z" fill="#fff" /><path d="M10 5q2 3 0 6M12 3q3 5 0 10M14 2q4 6 0 12" stroke="#fff" fill="none" /></>}
    {n === 'net' && <><path d="M5.500 4.500h10v8h-10z" fill="#5d6044" stroke="#fff" strokeWidth="1.500" /><path d="M7 15h7" stroke="#fff" strokeWidth="1.500" /><path d="M1 1h5v4H1zM3.500 5v9H6" fill="#6a6c4e" stroke="#fff" /></>}
  </svg>
);

/* ---------- rulers ---------- */

const CM = 56.65;

const HRulerMarks = () => {
  const zero = 170;
  const marks: React.ReactNode[] = [];
  for (let q = -11; q <= 71; q++) {
    const x = Math.round(zero + (q * CM) / 4);
    if (q === 0 || q === 66) continue;
    if (q % 4 === 0) marks.push(<text key={q} x={x} y="9" textAnchor="middle">{Math.abs(q / 4)}</text>);
    else marks.push(<path key={q} d={q % 2 === 0 ? `M${x + .5} 3v5` : `M${x + .5} 4v2`} stroke="#555b68" />);
  }
  marks.push(<text key="edge" x="0" y="9" textAnchor="middle">3</text>);
  const tabs = Array.from({ length: 13 }, (_, i) => <path key={`t${i}`} d={`M${Math.round(240 + i * 70.8) + .5} 13v3`} stroke="#6f7d94" />);
  return (
    <svg width="1191" height="11" fontSize="10" fill="#4d5361" fontFamily="'Open Sans', sans-serif">
      {marks}{tabs}
      <g fill="#d6e2f2" stroke="#4a76bd">
        <path d="M236.500-4.500h8v3l-4 4-4-4z" />
        <path d="M165.500 11.500v-3l4-4 4 4v3zM165.500 11.500h8v5h-8z" />
        <path d="M1101.500 11.500v-3l4-4 4 4v3z" />
      </g>
    </svg>
  );
};

const VRulerMarks = () => {
  const marks: React.ReactNode[] = [<path key="top" d="M5 7.500h2" stroke="#555b68" />];
  for (let q = 1; q <= 38; q++) {
    const y = Math.round(21 + (q * CM) / 4);
    if (q % 4 === 0) marks.push(<text key={q} transform={`translate(10 ${y}) rotate(-90)`} textAnchor="middle">{q / 4}</text>);
    else marks.push(<path key={q} d={q % 2 === 0 ? `M4 ${y - .5}h5` : `M5 ${y - .5}h2`} stroke="#555b68" />);
  }
  return <svg width="12" height="548" fontSize="10" fill="#4d5361" fontFamily="'Open Sans', sans-serif">{marks}</svg>;
};

/* ---------- document drawing ---------- */

const bars = [
  { x: 254, w: 39, y: 153, c: '#c4bc96' },
  { x: 293, w: 43, y: 111, c: '#fbd4b4' },
  { x: 336, w: 47, y: 68, c: '#c2d69a' },
  { x: 383, w: 45, y: 97, c: '#b6dde8' },
  { x: 428, w: 44, y: 124, c: '#f2dbdb' },
];
const legend = [
  { n: 'CL 1', x: 571, y: 124, w: 24, h: 19, c: '#c4bc96', t: 133 },
  { n: 'CL 2', x: 572, y: 160, w: 24, h: 16, c: '#e5b8b7', t: 165 },
  { n: 'CL 3', x: 572, y: 189, w: 25, h: 19, c: '#d6e3bc', t: 204 },
  { n: 'CL 4', x: 572, y: 226, w: 25, h: 16, c: '#92cddc', t: 240 },
  { n: 'CL 5', x: 572, y: 257, w: 24, h: 18, c: '#f2dbdb', t: 271 },
];

const Drawing = () => (
  <svg width="780" height="620" fontFamily="Lato, sans-serif" fontSize="15" fill="#000">
    <path d="M231 43v243M230 286h279" stroke="#555" strokeWidth="1.500" />
    {bars.map(b => <rect key={b.x} x={b.x} y={b.y} width={b.w} height={280.5 - b.y} fill={b.c} stroke="#222" />)}
    <text transform="translate(210 193) rotate(-90)" textAnchor="middle">Values</text>
    <text x="253" y="316">Recipe of concrete mixtures</text>
    {legend.map(l => (
      <g key={l.n}>
        <rect x={l.x} y={l.y} width={l.w} height={l.h} fill={l.c} stroke="#222" />
        <text x="636" y={l.t}>{l.n}</text>
      </g>
    ))}
    <rect x="259" y="480" width="144" height="118" fill="#fff" stroke="#555" strokeWidth="1.500" />
    <path d="M331.500 464v14" stroke="#385d8a" />
    <circle cx="331.500" cy="461.500" r="3.300" fill="#1fe01f" stroke="#22662a" strokeWidth=".8" />
    <g fill="#6d9be0" stroke="#2f5796" strokeWidth=".8">
      <circle cx="259.500" cy="480.500" r="3.300" /><circle cx="403.500" cy="480.500" r="3.300" /><rect x="328" y="477" width="7" height="7" />
      <rect x="256" y="549" width="7" height="7" /><rect x="400" y="549" width="7" height="7" />
    </g>
  </svg>
);

/* ---------- app ---------- */

const tabs: [string, number][] = [
  ['Главная', 70], ['Вставка', 70], ['Разметка страницы', 132], ['Ссылки', 68],
  ['Рассылки', 78], ['Рецензирование', 120], ['Вид', 48], ['ABBYY FineReader 11', 134],
];
const styleColors = ['#000000', '#4f81bd', '#c0504d', '#9bbb59', '#8064a2'];
const tasks = ['ie', 'ring', 'chrome', 'folder', 'excel', 'outlook', 'pdf', 'media', 'acrobat', 'edge'];

const GalleryScroll = () => (
  <ScrollColumn>
    <ScrollButton $off aria-label="Вверх"><CaretUp /></ScrollButton>
    <ScrollButton aria-label="Вниз"><Caret /></ScrollButton>
    <ScrollButton aria-label="Дополнительно"><CaretBar /></ScrollButton>
  </ScrollColumn>
);

const Menu = ({ icon, children, off }: { icon: React.ReactNode; children: string; off?: boolean }) => (
  <MenuButton disabled={off}>{icon}<span>{children}</span> <Caret c={off ? '#a8a8a8' : undefined} /></MenuButton>
);

const SizeField = ({ icon, label }: { icon: React.ReactNode; label: string }) => (
  <SizeRow>
    {icon}
    <SpinBox>
      <SpinInput type="text" aria-label={label} defaultValue="2,54 см" />
      <Spinners>
        <button type="button" aria-label="Больше"><CaretUp /></button>
        <button type="button" aria-label="Меньше"><Caret c="#244a86" /></button>
      </Spinners>
    </SpinBox>
  </SizeRow>
);

export default function App() {
  return (
    <Screen>
      <GlobalStyle />
      <TitleBar>
        <TitleLeft>
          <QuickAccess>
            <QatButton $w={17} aria-label="Сохранить"><SaveIcon /></QatButton>
            <QatButton $w={24} aria-label="Отменить"><UndoIcon /></QatButton>
            <QatButton $w={8} aria-label="Список отмены"><Caret /></QatButton>
            <QatButton $w={26} aria-label="Повторить"><RedoIcon /></QatButton>
            <QatButton $w={20} aria-label="Связь"><LinkIcon /></QatButton>
            <QatButton $w={8} aria-label="Список связей"><Caret c="#d3d3d0" /></QatButton>
            <StyleBox>Обычный<Caret /></StyleBox>
          </QuickAccess>
          <QatButton $w={22} aria-label="Настройка панели"><svg width="7" height="7" viewBox="0 0 7 7"><path d="M0 0h7v1H0zM0 3h7L3.500 6.500z" fill="#1f3f86" /></svg></QatButton>
          <WindowTitle>Документ1 - Microsoft Word</WindowTitle>
        </TitleLeft>
        <ContextTitle>Средства рисования</ContextTitle>
        <WindowButtons>
          <WindowButton aria-label="Свернуть"><svg width="12" height="4"><rect x=".5" y=".5" width="11" height="3" fill="#fff" stroke="#4c4c54" /></svg></WindowButton>
          <WindowButton aria-label="Восстановить"><svg width="12" height="12" fill="none"><path d="M3.500 3V.5h8v8H9M.5 3.500h8v8h-8zM3 6h3v3H3z" stroke="#4c4c54" strokeWidth="2.500" /><path d="M3.500 3V.5h8v8H9M.5 3.500h8v8h-8z" stroke="#fff" strokeWidth="1.300" /></svg></WindowButton>
          <WindowButton $close aria-label="Закрыть"><svg width="12" height="10"><path d="M2 1l8 8M10 1l-8 8" stroke="#5c2a22" strokeWidth="4" /><path d="M2 1l8 8M10 1l-8 8" stroke="#fff" strokeWidth="2.500" /></svg></WindowButton>
        </WindowButtons>
      </TitleBar>

      <TabRow>
        {tabs.map(([t, w]) => <Tab key={t} $w={w}>{t}</Tab>)}
        <ActiveTab $w={118}>Формат</ActiveTab>
        <HelpButton aria-label="Справка"><HelpIcon /></HelpButton>
      </TabRow>

      <Ribbon>
        <Group $w={179}>
          <GroupBody>
            <Gallery>
              <ShapeGrid>
                <IconButton aria-label="Надпись"><TextBoxIcon /></IconButton>
                {shapePaths.map((_, i) => <IconButton key={i} aria-label={`Фигура ${i + 1}`}><ShapeIcon i={i} /></IconButton>)}
              </ShapeGrid>
              <GalleryScroll />
            </Gallery>
            <EditColumn>
              <IconButton aria-label="Изменить узлы"><EditPointsIcon /></IconButton>
              <button aria-label="Вставить надпись"><TextBoxIcon /></button>
            </EditColumn>
          </GroupBody>
          <GroupLabel>Вставить фигуры</GroupLabel>
        </Group>

        <Group $w={437}>
          <GroupBody>
            <Gallery $wide>
              <Swatches>
                {styleColors.map(c => <Swatch key={c} $c={c} aria-label={`Стиль ${c}`} />)}
              </Swatches>
              <GalleryScroll />
            </Gallery>
            <ButtonColumn $ml={5}>
              <Menu icon={<FillIcon />}>Заливка фигуры</Menu>
              <Menu icon={<OutlineIcon />}>Контур фигуры</Menu>
              <Menu icon={<ChangeShapeIcon />}>Изменить фигуру</Menu>
            </ButtonColumn>
          </GroupBody>
          <GroupLabel>Стили фигур<Launcher aria-label="Формат автофигуры"><LauncherIcon /></Launcher></GroupLabel>
        </Group>

        <Group $w={137}>
          <GroupBody>
            <BigButton $w={52}>
              <BigIcon><ShadowBigIcon /></BigIcon>
              <BigLabel>Эффекты</BigLabel>
              <BigLabel>тени <Caret /></BigLabel>
            </BigButton>
            <Divider $m="2px 5px 0 6px" />
            <NudgePad>
              <PadButton $area="1 / 2" aria-label="Тень выше"><NudgeIcon dir="up" /></PadButton>
              <PadButton $area="2 / 1" aria-label="Тень левее"><NudgeIcon dir="left" /></PadButton>
              <PadButton $area="2 / 2" aria-label="Вкл. или выкл. тень"><ShadowToggleIcon /></PadButton>
              <PadButton $area="2 / 3" aria-label="Тень правее"><NudgeIcon dir="right" /></PadButton>
              <PadButton $area="3 / 2" aria-label="Тень ниже"><NudgeIcon dir="down" /></PadButton>
            </NudgePad>
          </GroupBody>
          <GroupLabel>Эффекты тени</GroupLabel>
        </Group>

        <Group $w={124}>
          <GroupBody>
            <BigButton $w={40}>
              <BigIcon><CubeBigIcon /></BigIcon>
              <BigLabel>Объем</BigLabel>
              <BigLabel><Caret /></BigLabel>
            </BigButton>
            <Divider $m="2px 4px 0 5px" />
            <NudgePad>
              <PadButton $area="1 / 2" aria-label="Наклонить вниз"><TiltIcon dir="down" /></PadButton>
              <PadButton $area="2 / 1" aria-label="Повернуть влево"><TiltIcon dir="left" /></PadButton>
              <PadButton $area="2 / 2" aria-label="Вкл. или выкл. объем"><CubeToggleIcon /></PadButton>
              <PadButton $area="2 / 3" aria-label="Повернуть вправо"><TiltIcon dir="right" /></PadButton>
              <PadButton $area="3 / 2" aria-label="Наклонить вверх"><TiltIcon dir="up" /></PadButton>
            </NudgePad>
          </GroupBody>
          <GroupLabel>Объем</GroupLabel>
        </Group>

        <Group $w={325}>
          <GroupBody>
            <BigButton $w={66}>
              <BigIcon><PositionBigIcon /></BigIcon>
              <BigLabel>Положение</BigLabel>
              <BigLabel><Caret /></BigLabel>
            </BigButton>
            <ButtonColumn $ml={4}>
              <Menu icon={<StackIcon front />}>На передний план</Menu>
              <Menu icon={<StackIcon />}>На задний план</Menu>
              <Menu icon={<WrapIcon />}>Обтекание текстом</Menu>
            </ButtonColumn>
            <ButtonColumn $ml={7}>
              <Menu icon={<AlignIcon />}>Выровнять</Menu>
              <Menu icon={<GroupIcon />} off>Группировать</Menu>
              <Menu icon={<RotateIcon />}>Повернуть</Menu>
            </ButtonColumn>
          </GroupBody>
          <GroupLabel>Упорядочить</GroupLabel>
        </Group>

        <Group $w={101}>
          <GroupBody>
            <SizeColumn>
              <SizeField icon={<HeightIcon />} label="Высота фигуры" />
              <SizeField icon={<WidthIcon />} label="Ширина фигуры" />
            </SizeColumn>
          </GroupBody>
          <GroupLabel>Размер<Launcher aria-label="Размер"><LauncherIcon /></Launcher></GroupLabel>
        </Group>
      </Ribbon>

      <Main>
        <DocColumn>
          <RulerRow>
            <TabSelector aria-label="Табуляция"><svg width="15" height="15"><rect x=".5" y=".5" width="14" height="14" fill="#e8f0fa" stroke="#6a8fd0" /><path d="M6 5v6h5" fill="none" stroke="#2c3d5c" strokeWidth="2" /></svg></TabSelector>
            <HorizontalRuler><HRulerMarks /></HorizontalRuler>
          </RulerRow>
          <Workspace>
            <VerticalRuler><VerticalStrip><VRulerMarks /></VerticalStrip></VerticalRuler>
            <Desk>
              <Swoosh width="66" height="200" viewBox="0 0 66 200">
                <path d="M0 0h66v69Q40 78 0 94z" fill="#b4cfee" opacity=".5" />
                <path d="M0 115Q40 92 66 80" fill="none" stroke="#b3cdee" opacity=".8" />
              </Swoosh>
              <Page><Drawing /></Page>
            </Desk>
          </Workspace>
        </DocColumn>
        <ScrollBar>
          <SplitHandle aria-label="Разделить" />
          <RulerToggle aria-label="Линейка"><svg width="12" height="12"><path d="M.5 2.500h3v-2h3v2h5v6h-3v3h-3v-2h-5z" fill="#f4f2f4" stroke="#3d4a63" /><path d="M4 3l4 4" stroke="#3d4a63" strokeDasharray="1 1" /></svg></RulerToggle>
          <Track>
            <svg width="9" height="5"><path d="M0 5h9L4.500 0z" fill="#33425f" /></svg>
            <Thumb aria-label="Полоса прокрутки"><svg width="8" height="7"><path d="M0 .5h8M0 2.500h8M0 4.500h8M0 6.500h8" stroke="#64788f" /></svg></Thumb>
            <svg width="9" height="5"><path d="M0 0h9L4.500 5z" fill="#33425f" /></svg>
          </Track>
          <BrowseButtons>
            <button aria-label="Предыдущая страница"><svg width="5" height="7"><path d="M0 3h5L2.500 0zM0 6h5L2.500 3zM0 6h5v1H0z" /></svg></button>
            <button aria-label="Выбор объекта перехода"><svg width="7" height="7"><circle cx="3.500" cy="3.500" r="3" fill="#c9c9c9" stroke="#222" /></svg></button>
            <button aria-label="Следующая страница"><svg width="5" height="7"><path d="M0 1h5L2.500 4zM0 4h5L2.500 7zM0 0h5v1H0z" /></svg></button>
          </BrowseButtons>
        </ScrollBar>
      </Main>

      <StatusBar>
        <StatusItem $w={105}>Страница: 1 из 1</StatusItem>
        <StatusItem $w={95}>Число слов: 15</StatusItem>
        <StatusItem $w={163}><ProofIcon />Русский (Россия)</StatusItem>
        <StatusTools>
          <ViewButtons>
            {[0, 1, 2, 3, 4].map(k => <ViewButton key={k} $on={k === 0} aria-label={`Режим ${k + 1}`}><SheetIcon kind={k} /></ViewButton>)}
          </ViewButtons>
          <ZoomValue>150%</ZoomValue>
          <button aria-label="Уменьшить"><ZoomIcon /></button>
          <ZoomSlider type="range" min={0} max={100} defaultValue={56} aria-label="Масштаб" />
          <button aria-label="Увеличить"><ZoomIcon plus /></button>
        </StatusTools>
      </StatusBar>

      <TaskBar>
        <StartOrb aria-label="Пуск"><WinLogo /></StartOrb>
        {tasks.map(t => <Task key={t} $open={t === 'chrome' || t === 'folder'} aria-label={t}><TaskIcon n={t} /></Task>)}
        {['Y', 'N', 'M'].map(k => <Task key={k}><KeyTile>{k}</KeyTile></Task>)}
        <ActiveTask aria-label="Word"><TaskIcon n="word" /></ActiveTask>
        <Tray>
          <Language>RU</Language>
          <HiddenIcons aria-label="Скрытые значки"><svg width="8" height="4"><path d="M0 4h8L4 0z" fill="#fff" /></svg></HiddenIcons>
          {['update', 'power', 'sound', 'net'].map(n => <button key={n} aria-label={n}><TrayIcon n={n} /></button>)}
          <Clock>12:25</Clock>
          <ShowDesktop aria-label="Свернуть все окна" />
        </Tray>
      </TaskBar>

      <Orb aria-label="Кнопка Office"><OfficeLogo /></Orb>
    </Screen>
  );
}
